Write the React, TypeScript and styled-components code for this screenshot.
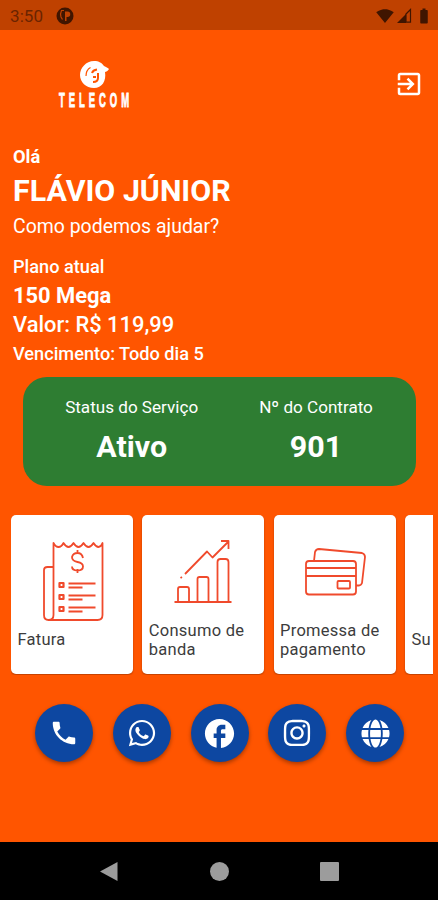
import React from 'react';
import styled, { createGlobalStyle } from 'styled-components';
import { MdExitToApp, MdPhone, MdFacebook, MdSignalWifi4Bar, MdBatteryFull } from 'react-icons/md';
import { FaWhatsapp, FaInstagram, FaGlobe } from 'react-icons/fa';

const GlobalStyle = createGlobalStyle`
  * { box-sizing: border-box; }
  body { margin: 0; background: #ff5500; font-family: Roboto, "Liberation Sans", sans-serif; }
`;

const Screen = styled.div`
  display: flex;
  flex-direction: column;
  width: 438px;
  height: 900px;
  overflow: hidden;
  background: #ff5500;
  color: #fff;
`;

const StatusBar = styled.header`
  display: flex;
  align-items: center;
  flex: none;
  height: 30px;
  padding: 1px 5px 0 10px;
  background: #bf4100;
  color: #6b2400;
  font-size: 17px;
  letter-spacing: 0.1px;
`;

const AppBadge = styled.svg`
  width: 18px;
  height: 18px;
  margin-left: 13px;
`;

const StatusIcons = styled.div`
  display: flex;
  align-items: center;
  gap: 3px;
  margin-left: auto;
  color: #401500;
`;

const Signal = styled.svg`
  width: 15px;
  height: 15px;
`;

const TopBar = styled.div`
  display: flex;
  align-items: center;
  justify-content: space-between;
  flex: none;
  height: 108px;
  padding: 0 14px 0 59px;
`;

const Brand = styled.div`
  display: flex;
  flex-direction: column;
  align-items: center;
  width: 71px;
`;

const BrandMark = styled.svg`
  width: 31px;
  height: 29px;
`;

const BrandName = styled.div`
  width: 71px;
  height: 17px;
  margin-top: 3px;
  font: 700 20px/17px "Liberation Sans", sans-serif;
  letter-spacing: 8.3px;
  white-space: nowrap;
  -webkit-text-stroke: 0.9px #fff;
  transform: scaleX(0.475);
  transform-origin: left center;
`;

const Greeting = styled.section`
  flex: none;
  height: 239px;
  padding: 8px 13px 0;
`;

interface LineProps {
  $size: number;
  $height: number;
  $weight?: number;
  $gap?: number;
}

const Line = styled.div<LineProps>`
  font-size: ${p => p.$size}px;
  line-height: ${p => p.$height}px;
  font-weight: ${p => p.$weight ?? 400};
  margin-top: ${p => p.$gap ?? 0}px;
  white-space: nowrap;
`;

const StatusCard = styled.section`
  display: flex;
  justify-content: center;
  gap: 61px;
  flex: none;
  width: 393px;
  height: 109px;
  margin-left: 23px;
  padding: 18px 1px 0 0;
  border-radius: 24px;
  background: #2e7d32;
  text-align: center;
`;

const Carousel = styled.section`
  display: flex;
  flex: none;
  gap: 9.3px;
  height: 160px;
  width: 421.5px;
  margin: 29px 0 0 11px;
  overflow: hidden;
`;

const Card = styled.article<{ $single?: boolean }>`
  flex: none;
  width: 122px;
  height: 159px;
  padding: ${p => (p.$single ? 115 : 105.5)}px 0 0 6.5px;
  border-radius: 5px;
  background: #fff;
  box-shadow: 0 1px 2px rgba(0, 0, 0, 0.3);
  color: #3c3c3c;
  font-size: 16.5px;
  line-height: 19.5px;
  letter-spacing: 0.25px;
  position: relative;
`;

const CardArt = styled.svg`
  position: absolute;
  left: 0;
  top: 0;
  width: 122px;
  height: 120px;
  fill: none;
  stroke: #f04a2c;
  stroke-width: 1.8;
  stroke-linejoin: round;
`;

const Contacts = styled.nav`
  display: flex;
  flex: none;
  gap: 19.8px;
  margin: 29px 0 0 35px;
`;

const ContactButton = styled.a`
  display: flex;
  align-items: center;
  justify-content: center;
  width: 58px;
  height: 58px;
  border-radius: 50%;
  background: #0d47a1;
  box-shadow: 0 2px 4px rgba(0, 0, 0, 0.35);
`;

const NavBar = styled.footer`
  flex: none;
  display: flex;
  justify-content: center;
  align-items: center;
  gap: 91px;
  height: 58px;
  margin-top: auto;
  background: #000;
`;

const NavIcon = styled.svg`
  width: 19px;
  height: 19px;
  fill: #9c9c9c;
`;

const InvoiceArt = () => (
  <CardArt viewBox="0 0 122 120">
    <path d="M42 28q2 4 5 4t5-4q2.500 4 5 4t5-4q2.500 4 5 4t5-4q2.500 4 5 4t5-4q2.500 4 5 4t4-4v72q0 5-5 5H37q5 0 5-5zM42 52h-6q-3.500 0-3.500 3v45q0 5 4.500 5" transform="translate(0.5 0)" />
    <path d="M66.500 35v3M66.500 54v4M72 43q-1-5-5.500-5t-5.500 4q0 4 5.500 5t5.500 4.500q0 4-5.500 4t-5.500-4" />
    <g strokeWidth="2.200">
      <path d="M48.500 68h4v4h-4zM48.500 80h4v4h-4zM48.500 92h4v4h-4zM57.500 68.500h27M57.500 80.500h27" />
    </g>
    <path d="M57.500 72.500h14M57.500 84.500h14M57.500 92.500h27M57.500 96.500h14" />
  </CardArt>
);

const UsageArt = () => (
  <CardArt viewBox="0 0 122 120">
    <path d="M32.500 87h57M36 87V74q0-2 2-2h7q2 0 2 2v13M55.500 87V64q0-2 2-2h7q2 0 2 2v23M75.500 87V47q0-3 3-3h5q3 0 3 3v40" />
    <path d="M38.500 63l1.500-1M43 59l22-22.500 5.500 6 16-16M79 26h7.500v8" />
  </CardArt>
);

const PaymentArt = () => (
  <CardArt viewBox="0 0 122 120">
    <rect x="32" y="46" width="50" height="33.500" rx="3" />
    <path d="M32 53h50M32 61h50M40 46l1-9q1-3 4-3l43 4q3 1 3 4l-3 26q-1 2.500-3 2.500h-3" />
    <rect x="63.500" y="66" width="12.500" height="7.500" rx="1" />
  </CardArt>
);

export default function App() {
  return (
    <>
      <GlobalStyle />
      <Screen>
        <StatusBar>
          <span>3:50</span>
          <AppBadge viewBox="0 0 18 18">
            <circle cx="9" cy="9" r="8.500" fill="#401500" />
            <path d="M8 3.500H5.500q-1.500 3-.5 6.500l1.500 2.500" fill="none" stroke="#bf4100" strokeWidth="1.200" />
            <path d="M9 14V4.500h2.500a2.500 2.500 0 0 1 0 5.500H10.500v4z" fill="#bf4100" />
          </AppBadge>
          <StatusIcons>
            <MdSignalWifi4Bar size={18} />
            <Signal viewBox="0 0 15 15">
              <path d="M0 15L9 6v9z" fill="#401500" />
              <path d="M9 6l4.500-4.500v12.700H9z" fill="none" stroke="#401500" strokeWidth="1.200" />
            </Signal>
            <MdBatteryFull size={18} />
          </StatusIcons>
        </StatusBar>
        <TopBar>
          <Brand>
            <BrandMark viewBox="0 0 31 29">
              <path
                d="M15 1c5 0 8 2 10 5 2 1 4 2 5 3-1 2-3 3-4 3 1.500 9-3 16-11 16C7 28 1 22 1 15S7 1 15 1z"
                fill="#fff"
              />
              <path d="M7 16q0-6 4.500-8.500" fill="none" stroke="#ff5500" strokeWidth="1.200" />
              <path d="M13 13q1-3 5-3.500M19 13v5q0 4-5 4M14 17h3" fill="none" stroke="#ff5500" strokeWidth="2" />
            </BrandMark>
            <BrandName>TELECOM</BrandName>
          </Brand>
          <MdExitToApp size={30} />
        </TopBar>
        <Greeting>
          <Line $size={18.3} $height={21} $weight={700}>Olá</Line>
          <Line $size={30.4} $height={36} $weight={700} $gap={6}>FLÁVIO JÚNIOR</Line>
          <Line $size={19.45} $height={24} $gap={6}>Como podemos ajudar?</Line>
          <Line $size={18.2} $height={20} $weight={500} $gap={18}>Plano atual</Line>
          <Line $size={21.9} $height={26} $weight={700} $gap={6}>150 Mega</Line>
          <Line $size={21.9} $height={26} $weight={500} $gap={3}>Valor: R$ 119,99</Line>
          <Line $size={18.2} $height={20} $weight={500} $gap={6}>Vencimento: Todo dia 5</Line>
        </Greeting>
        <StatusCard>
          <div>
            <Line $size={17.1} $height={24}>Status do Serviço</Line>
            <Line $size={30.4} $height={36} $weight={700} $gap={10}>Ativo</Line>
          </div>
          <div>
            <Line $size={17.1} $height={24}>Nº do Contrato</Line>
            <Line $size={30.4} $height={36} $weight={700} $gap={10}>901</Line>
          </div>
        </StatusCard>
        <Carousel>
          <Card $single><InvoiceArt />Fatura</Card>
          <Card><UsageArt />Consumo de<br />banda</Card>
          <Card><PaymentArt />Promessa de<br />pagamento</Card>
          <Card $single>Su</Card>
        </Carousel>
        <Contacts>
          <ContactButton><MdPhone size={30} /></ContactButton>
          <ContactButton><FaWhatsapp size={30} /></ContactButton>
          <ContactButton><MdFacebook size={35} /></ContactButton>
          <ContactButton><FaInstagram size={30} /></ContactButton>
          <ContactButton><FaGlobe size={29} /></ContactButton>
        </Contacts>
        <NavBar>
          <NavIcon viewBox="0 0 19 19"><path d="M0 9.500L17.500 0v19z" /></NavIcon>
          <NavIcon viewBox="0 0 19 19"><circle cx="9.500" cy="9.500" r="9.500" /></NavIcon>
          <NavIcon viewBox="0 0 19 19"><rect width="19" height="19" rx="1" /></NavIcon>
        </NavBar>
      </Screen>
    </>
  );
}
